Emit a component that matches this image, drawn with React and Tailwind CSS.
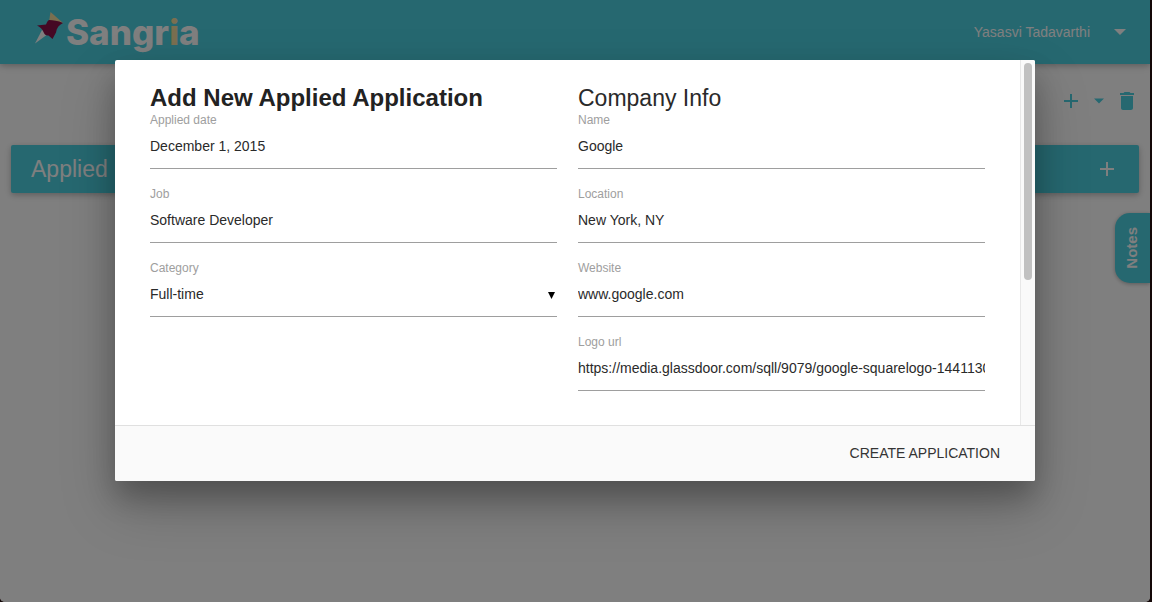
import React from "react";

function Logo() {
  return (
    <a href="#home" aria-label="Sangria" className="flex items-center text-white">
      <svg width="30" height="34" viewBox="0 0 30 34" className="mb-2" aria-hidden="true">
        <path d="M8 19L1 32.500L14 23Z" fill="#ffffff" />
        <path d="M16.500 1L29 12L15 11Z" fill="#f5dfa0" />
        <path d="M3 14.500L12 13.500C13 11.500 13.500 9.500 15 9C19 9.500 24 9.500 29 12C25 14 22.500 17 22 21.500L18.500 28L14.500 24.500C12 25 10 23 9.500 21C8.500 18 6 16 3 14.500Z" fill="#8a1048" />
      </svg>
      <span className="ml-[2px] font-['Inter'] text-[35px] leading-[36px] font-extrabold">
        Sangr<span className="text-[#f5dfa0]">i</span>a
      </span>
    </a>
  );
}

function Caret({ className }) {
  return (
    <svg width="12" height="6" viewBox="0 0 12 6" className={className} aria-hidden="true">
      <path d="M0 0h12L6 6z" fill="currentColor" />
    </svg>
  );
}

function Plus() {
  return (
    <svg width="14" height="14" viewBox="0 0 14 14" aria-hidden="true">
      <path d="M6 0h2v6h6v2H8v6H6V8H0V6h6z" fill="currentColor" />
    </svg>
  );
}

function Trash() {
  return (
    <svg width="14" height="18" viewBox="0 0 14 18" aria-hidden="true">
      <path d="M1 16c0 1.100.9 2 2 2h8c1.100 0 2-.9 2-2V4H1v12zM14 1h-3.500l-1-1h-5l-1 1H0v2h14V1z" fill="currentColor" />
    </svg>
  );
}

const controlClass =
  "block h-[41px] w-full appearance-none rounded-none border-b border-[#9e9e9e] bg-transparent pb-1 text-[14px] text-[#2a2a2a] outline-none";

function Field({ id, label, value }) {
  return (
    <div>
      <label htmlFor={id} className="block text-[12px] leading-4 text-[#9e9e9e]">{label}</label>
      <input id={id} type="text" defaultValue={value} className={controlClass} />
    </div>
  );
}

function CategoryField() {
  return (
    <div>
      <label htmlFor="category" className="block text-[12px] leading-4 text-[#9e9e9e]">Category</label>
      <div className="relative">
        <select id="category" defaultValue="Full-time" className={controlClass}>
          <option>Full-time</option>
        </select>
        <svg width="7" height="7" viewBox="0 0 7 7" className="pointer-events-none absolute top-4 right-[2px]" aria-hidden="true">
          <path d="M0 0h7L3.500 7z" fill="#000" />
        </svg>
      </div>
    </div>
  );
}

function Modal() {
  return (
    <div role="dialog" aria-labelledby="dialog-title" className="flex h-[70vh] w-4/5 flex-col overflow-hidden rounded-[2px] bg-white shadow-[0_16px_28px_0_rgba(0,0,0,0.22),0_25px_55px_0_rgba(0,0,0,0.21)]">
      <div className="flex min-h-0 flex-1">
        <form className="grid flex-1 grid-cols-2 items-start gap-[21px] overflow-hidden px-[35px] pt-6">
          <div className="flex min-w-0 flex-col gap-[17px]">
            <div>
              <h1 id="dialog-title" className="text-[24px] leading-7 font-bold whitespace-nowrap text-[#222]">Add New Applied Application</h1>
              <Field id="applied-date" label="Applied date" value="December 1, 2015" />
            </div>
            <Field id="job" label="Job" value="Software Developer" />
            <CategoryField />
          </div>
          <div className="flex min-w-0 flex-col gap-[17px]">
            <div>
              <h2 className="text-[23px] leading-7 text-[#2a2a2a]">Company Info</h2>
              <Field id="name" label="Name" value="Google" />
            </div>
            <Field id="location" label="Location" value="New York, NY" />
            <Field id="website" label="Website" value="www.google.com" />
            <Field id="logo-url" label="Logo url" value="https://media.glassdoor.com/sqll/9079/google-squarelogo-1441130773284.png" />
          </div>
        </form>
        <div className="w-[15px] border-l border-[#e8e8e8] bg-[#fafafa] px-[3px] pt-[3px]">
          <div className="h-3/5 w-2 rounded-full bg-[#c1c1c1]" />
        </div>
      </div>
      <div className="flex h-14 shrink-0 items-center justify-end border-t border-[#e0e0e0] bg-[#fafafa] px-[35px]">
        <button type="button" className="text-[14px] text-[#343434] uppercase">Create Application</button>
      </div>
    </div>
  );
}

export default function App() {
  return (
    <div className="h-screen bg-[#140808] pr-[2px] font-['Liberation_Sans',Arial,sans-serif]">
      <div className="relative h-full overflow-hidden rounded-b-[5px] bg-white">
        <header className="flex h-16 items-center justify-between bg-[#4dd0e1] pr-6 pl-[34px] shadow-[0_2px_5px_0_rgba(0,0,0,0.16),0_2px_10px_0_rgba(0,0,0,0.12)]">
          <Logo />
          <button type="button" className="flex items-center gap-6 text-[14px] text-white">
            Yasasvi Tadavarthi
            <Caret />
          </button>
        </header>
        <div className="flex h-[81px] items-center justify-end gap-4 px-4 pb-2 text-[#4dd0e1]">
          <button type="button" aria-label="Add"><Plus /></button>
          <button type="button" aria-label="More"><Caret className="w-[10px]" /></button>
          <button type="button" aria-label="Delete"><Trash /></button>
        </div>
        <section className="mx-[11px] flex h-12 items-center justify-between rounded-[2px] bg-[#4dd0e1] pr-[25px] pl-5 text-white shadow-[0_2px_5px_0_rgba(0,0,0,0.16),0_2px_10px_0_rgba(0,0,0,0.12)]">
          <h2 className="text-[23px]">Applied</h2>
          <button type="button" aria-label="Add applied application"><Plus /></button>
        </section>
        <button type="button" className="absolute top-[213px] right-0 flex h-[70px] w-[35px] items-center justify-center rounded-l-[15px] bg-[#4dd0e1] text-[15px] font-bold text-white shadow-[0_1px_4px_rgba(0,0,0,0.3)]">
          <span className="rotate-180 [writing-mode:vertical-rl]">Notes</span>
        </button>
        <div className="absolute inset-0 flex items-start justify-center bg-black/50 pt-[60px]">
          <Modal />
        </div>
      </div>
    </div>
  );
}
